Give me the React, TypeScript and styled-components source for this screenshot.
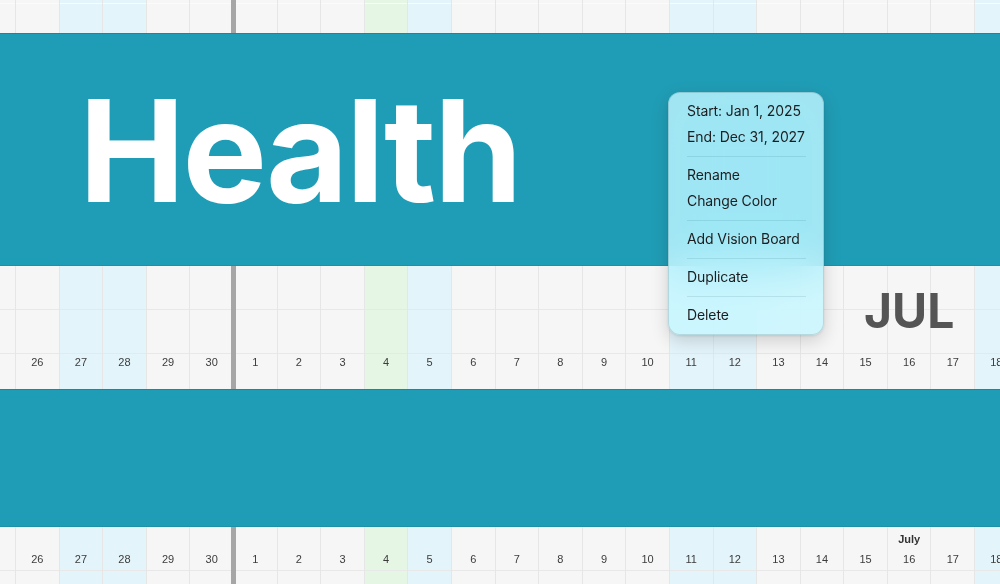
import styled, { createGlobalStyle, css } from "styled-components";

const COL = 43.6;

type Kind = "plain" | "weekend" | "holiday";
type Day = { month: "Jun" | "Jul"; day: number; kind: Kind };

// June 25 .. July 18 (2026), weekends tinted, July 4 marked as holiday
const days: Day[] = [];
for (let d = 25; d <= 30; d++) {
  days.push({ month: "Jun", day: d, kind: d === 27 || d === 28 ? "weekend" : "plain" });
}
for (let d = 1; d <= 18; d++) {
  let kind: Kind = "plain";
  if (d === 4) kind = "holiday";
  else if ([5, 11, 12, 18].includes(d)) kind = "weekend";
  days.push({ month: "Jul", day: d, kind });
}

const GlobalStyle = createGlobalStyle`
  html, body {
    margin: 0;
    padding: 0;
    background: #f6f6f6;
    overflow: hidden;
  }
  body {
    font-family: "Liberation Sans", Arial, sans-serif;
  }
`;

const Page = styled.div`
  width: 1000px;
  height: 584px;
  overflow: hidden;
  position: relative;
  display: flex;
  flex-direction: column;
`;

const Strip = styled.section<{ $height: number }>`
  height: ${(p) => p.$height}px;
  flex: none;
  position: relative;
  overflow: hidden;
`;

const Track = styled.div`
  display: flex;
  height: 100%;
  margin-left: -27.6px;
`;

const bg: Record<Kind, string> = {
  plain: "#f6f6f6",
  weekend: "#e3f4fa",
  holiday: "#e6f6e5",
};

const Column = styled.div<{ $kind: Kind; $monthStart: boolean; $rows: string }>`
  width: ${COL}px;
  flex: none;
  box-sizing: border-box;
  border-right: 1px solid #e6e6e6;
  background: ${(p) => bg[p.$kind]};
  display: grid;
  grid-template-rows: ${(p) => p.$rows};
  position: relative;
  ${(p) =>
    p.$monthStart &&
    css`
      &::before {
        content: "";
        position: absolute;
        top: 0;
        bottom: 0;
        left: -2.5px;
        width: 5px;
        background: #a6a6a6;
        z-index: 2;
      }
    `}
`;

const Cell = styled.div<{ $line?: string }>`
  box-sizing: border-box;
  border-bottom: 1px solid ${(p) => p.$line ?? "#e8e8e8"};
`;

const NumCell = styled.div`
  text-align: center;
  font-size: 11px;
  line-height: 17px;
  color: #3c3c3c;
`;

const HeadCell = styled.div`
  box-sizing: border-box;
  border-bottom: 1px solid #e8e8e8;
  display: flex;
  flex-direction: column;
  justify-content: space-between;
  align-items: center;
  padding: 4px 0 3px;
  font-size: 11px;
  line-height: 16px;
  color: #3c3c3c;
`;

const MonthLabel = styled.span`
  height: 16px;
  font-weight: 700;
  color: #333;
`;

const Band = styled.section<{ $height: number }>`
  height: ${(p) => p.$height}px;
  flex: none;
  box-sizing: border-box;
  background: #209db6;
  border-top: 1px solid #18889e;
  border-bottom: 1px solid #1c92a9;
`;

const Title = styled.h1`
  margin: 0;
  padding: 45px 0 0 79px;
  font-family: Inter, "Liberation Sans", sans-serif;
  font-weight: 700;
  font-size: 142px;
  line-height: 1;
  color: #fff;
  letter-spacing: -2.5px;
`;

const MonthMark = styled.div`
  position: absolute;
  left: 864px;
  top: 21px;
  font-family: Inter, "Liberation Sans", sans-serif;
  font-weight: 700;
  font-size: 48px;
  line-height: 1;
  color: #555;
  z-index: 3;
`;

const Menu = styled.div`
  position: absolute;
  left: 668px;
  top: 92px;
  width: 156px;
  box-sizing: border-box;
  padding: 5px 0 6px;
  border-radius: 12px;
  background: rgba(198, 246, 255, 0.8);
  backdrop-filter: blur(24px) saturate(1.4);
  border: 0.5px solid rgba(0, 0, 0, 0.12);
  box-shadow: 0 6px 18px rgba(0, 0, 0, 0.16), 0 1px 3px rgba(0, 0, 0, 0.1);
  font-family: Inter, "Noto Sans", sans-serif;
  z-index: 10;
`;

const MenuItem = styled.div`
  height: 26px;
  line-height: 26px;
  padding: 0 18px;
  font-size: 14px;
  letter-spacing: -0.1px;
  color: #1d1d1f;
  white-space: nowrap;
`;

const Divider = styled.div`
  height: 1px;
  margin: 5.5px 17px 5.5px 18px;
  background: rgba(0, 60, 80, 0.1);
`;

function DayStrip({
  rows,
  children,
}: {
  rows: string;
  children: (d: Day) => React.ReactNode;
}) {
  return (
    <Track>
      {days.map((d) => (
        <Column
          key={d.month + d.day}
          $kind={d.kind}
          $monthStart={d.month === "Jul" && d.day === 1}
          $rows={rows}
        >
          {children(d)}
        </Column>
      ))}
    </Track>
  );
}

export default function App() {
  return (
    <Page>
      <GlobalStyle />

      <Strip $height={33}>
        <DayStrip rows="4px 1fr">
          {() => (
            <>
              <Cell $line="#fbfbfb" />
              <div />
            </>
          )}
        </DayStrip>
      </Strip>

      <Band $height={233}>
        <Title>Health</Title>
      </Band>

      <Strip $height={123}>
        <DayStrip rows="44px 44px 1fr">
          {(d) => (
            <>
              <Cell />
              <Cell />
              <NumCell>{d.day}</NumCell>
            </>
          )}
        </DayStrip>
        <MonthMark>JUL</MonthMark>
      </Strip>

      <Band $height={138} />

      <Strip $height={57}>
        <DayStrip rows="44px 1fr">
          {(d) => (
            <>
              <HeadCell>
                <MonthLabel>{d.month === "Jul" && d.day === 16 ? "July" : ""}</MonthLabel>
                <span>{d.day}</span>
              </HeadCell>
              <div />
            </>
          )}
        </DayStrip>
      </Strip>

      <Menu>
        <MenuItem>Start: Jan 1, 2025</MenuItem>
        <MenuItem>End: Dec 31, 2027</MenuItem>
        <Divider />
        <MenuItem>Rename</MenuItem>
        <MenuItem>Change Color</MenuItem>
        <Divider />
        <MenuItem>Add Vision Board</MenuItem>
        <Divider />
        <MenuItem>Duplicate</MenuItem>
        <Divider />
        <MenuItem>Delete</MenuItem>
      </Menu>
    </Page>
  );
}
